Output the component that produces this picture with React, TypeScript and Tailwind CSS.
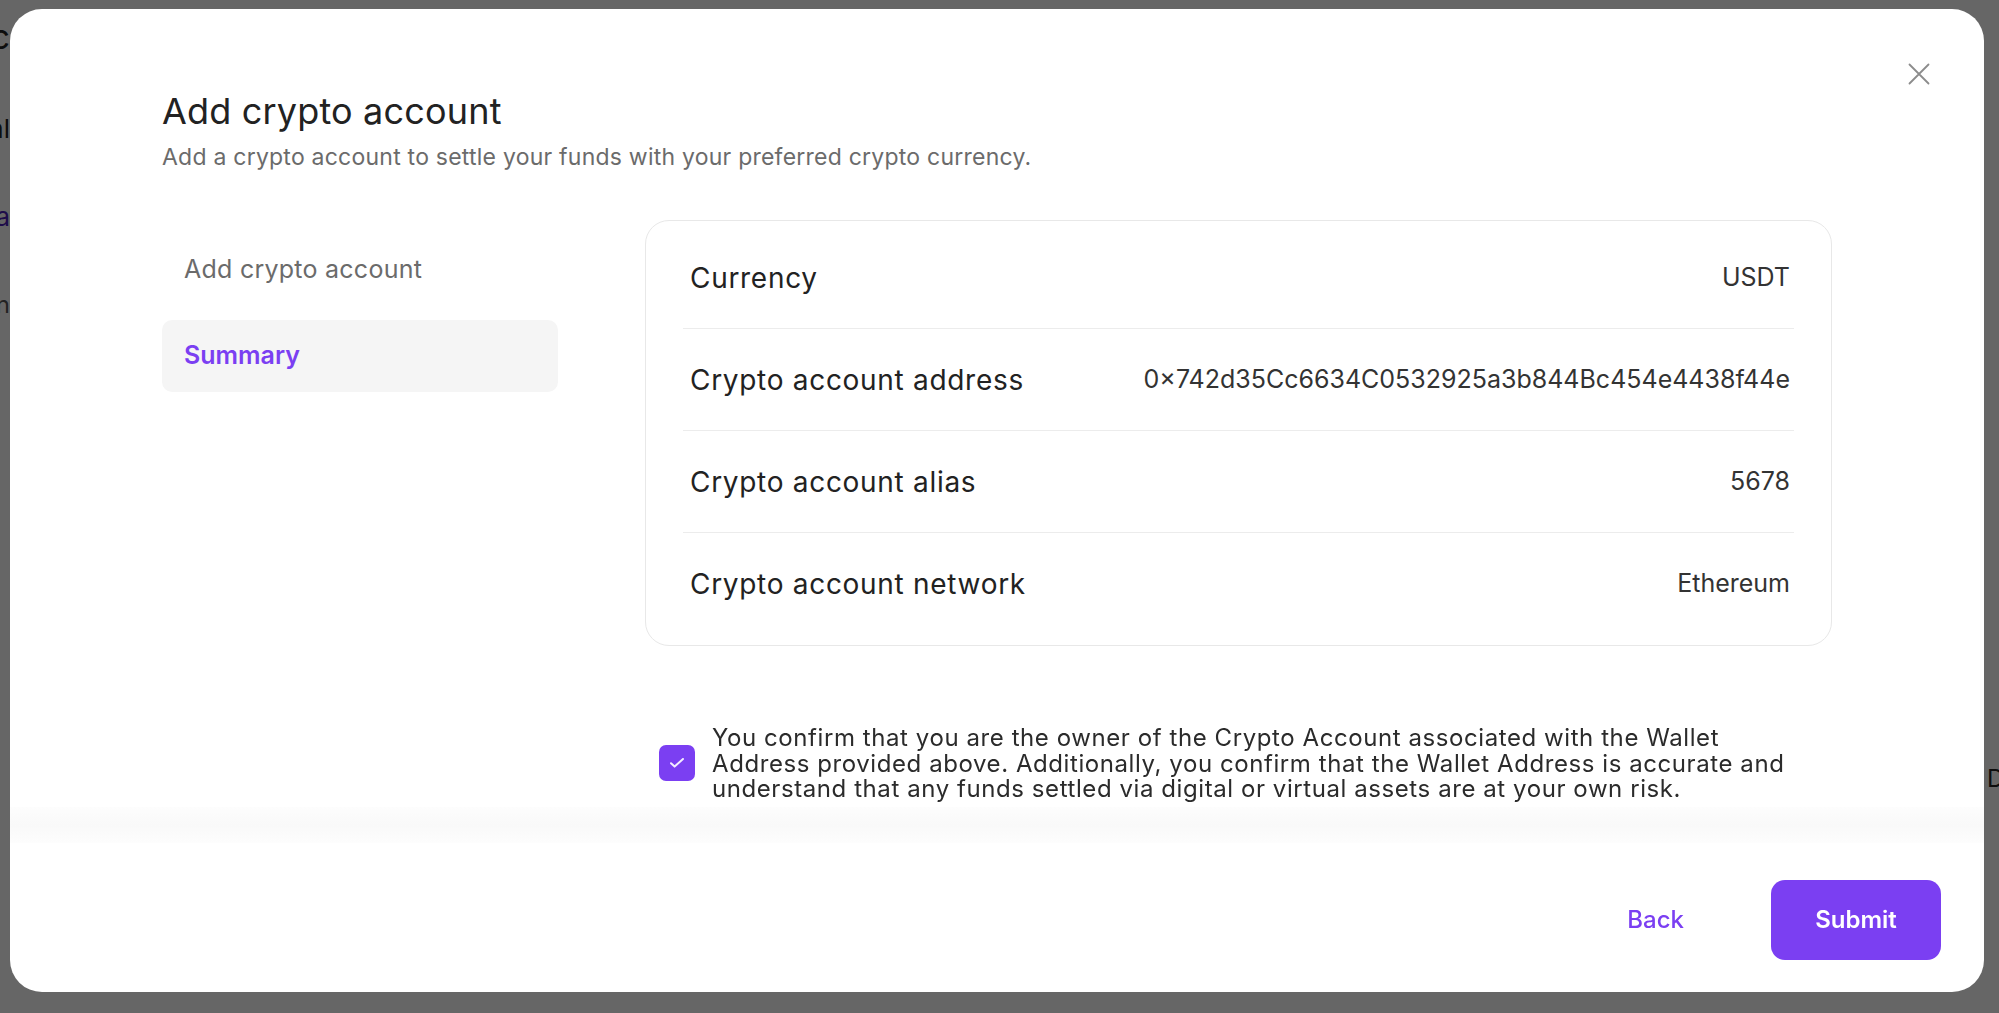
import React from 'react';

const rows = [
  { label: 'Currency', value: 'USDT' },
  { label: 'Crypto account address', value: '0×742d35Cc6634C0532925a3b844Bc454e4438f44e' },
  { label: 'Crypto account alias', value: '5678' },
  { label: 'Crypto account network', value: 'Ethereum' },
];

const CloseIcon = () => (
  <svg width="22" height="22" viewBox="0 0 22 22" fill="none" stroke="#8c8c8c" strokeWidth="1.8" strokeLinecap="round">
    <path d="M1.5 1.5L20.5 20.5M20.5 1.5L1.5 20.5" />
  </svg>
);

const CheckIcon = () => (
  <svg width="14" height="10" viewBox="0 0 14 10" fill="none" stroke="#f3ecff" strokeWidth="2" strokeLinecap="round" strokeLinejoin="round">
    <path d="M1 5.2L4.6 8.6L13 1" />
  </svg>
);

export default function App() {
  return (
    <div className="relative h-[1013px] w-[1999px] overflow-hidden bg-white font-['Inter','Liberation_Sans',sans-serif]">
      {/* page behind the dialog */}
      <div className="flex h-full justify-between">
        <div className="flex w-[10px] flex-col items-end whitespace-nowrap">
          <span className="mt-[20px] text-[34px] leading-[34px] text-[#222]">Settlement ac</span>
          <span className="mt-[60px] text-[26px] leading-[30px] text-[#222]">Crypto Wal</span>
          <span className="mt-[58px] text-[26px] leading-[30px] text-[#4b1fb8]">Add crypto a</span>
          <span className="mt-[58px] text-[24px] leading-[30px] text-[#555]">Ethereum Main n</span>
        </div>
        <div className="flex w-[12px] flex-col items-start whitespace-nowrap pt-[764px]">
          <span className="text-[24px] leading-[30px] text-[#222]">Date</span>
        </div>
      </div>

      {/* overlay + dialog */}
      <div className="fixed inset-0 bg-black/60 pl-[10px] pt-[9px]">
        <div className="relative flex h-[983px] w-[1974px] flex-col rounded-[32px] bg-white">
          <button type="button" className="absolute right-[54px] top-[54px]" title="Close">
            <CloseIcon />
          </button>

          <div className="flex flex-1 flex-col px-[152px] pt-[82px]">
            <h2 className="text-[36px] font-normal leading-[41px] tracking-[0.005em] text-[#222]">Add crypto account</h2>
            <p className="mt-[12px] text-[23px] leading-[26px] tracking-[0.01em] text-[#6b6b6b]">
              Add a crypto account to settle your funds with your preferred crypto currency.
            </p>

            <div className="mt-[50px] flex gap-[87px]">
              <nav className="mt-[14px] flex w-[396px] shrink-0 flex-col gap-[14px]">
                <div className="flex h-[72px] items-center rounded-[10px] px-[22px] text-[25px] tracking-[0.01em] text-[#6b6b6b]">
                  Add crypto account
                </div>
                <div className="flex h-[72px] items-center rounded-[10px] bg-[#f5f5f5] px-[22px] text-[25px] font-semibold text-[#7b3ff2]">
                  Summary
                </div>
              </nav>

              <div className="flex-1">
                <div className="rounded-[24px] border border-[#e8e8e8] px-[37px] pb-[10px] pt-[6px]">
                  {rows.map((r, i) => (
                    <div
                      key={r.label}
                      className={`flex h-[102px] items-center justify-between pl-[7px] pr-[4px] ${i < rows.length - 1 ? 'border-b border-[#ececec]' : ''}`}
                    >
                      <span className="text-[28px] tracking-[0.025em] text-[#222]">{r.label}</span>
                      <span className="text-[25px] text-[#333]">{r.value}</span>
                    </div>
                  ))}
                </div>

                <label className="mt-[79px] flex items-center gap-[17px] pl-[14px]">
                  <span className="flex h-[36px] w-[36px] shrink-0 items-center justify-center rounded-[7px] bg-[#7b3ff2]">
                    <CheckIcon />
                  </span>
                  <span className="text-[24px] leading-[25.5px] tracking-[0.024em] text-[#2b2b2b]">
                    You confirm that you are the owner of the Crypto Account associated with the Wallet
                    <br />
                    Address provided above. Additionally, you confirm that the Wallet Address is accurate and
                    <br />
                    understand that any funds settled via digital or virtual assets are at your own risk.
                  </span>
                </label>
              </div>
            </div>
          </div>

          <footer>
            <div className="h-[36px] bg-[linear-gradient(to_bottom,#fdfdfd,#f9f9f9_50%,#fdfdfd)]" />
            <div className="flex items-center justify-end gap-[47px] pb-[32px] pr-[43px] pt-[37px]">
              <button type="button" className="h-[80px] px-10 text-[24px] font-medium text-[#7b3ff2]">
                Back
              </button>
              <button type="button" className="h-[80px] w-[170px] rounded-[14px] bg-[#7b3ff2] text-[24px] font-semibold text-white">
                Submit
              </button>
            </div>
          </footer>
        </div>
      </div>
    </div>
  );
}
